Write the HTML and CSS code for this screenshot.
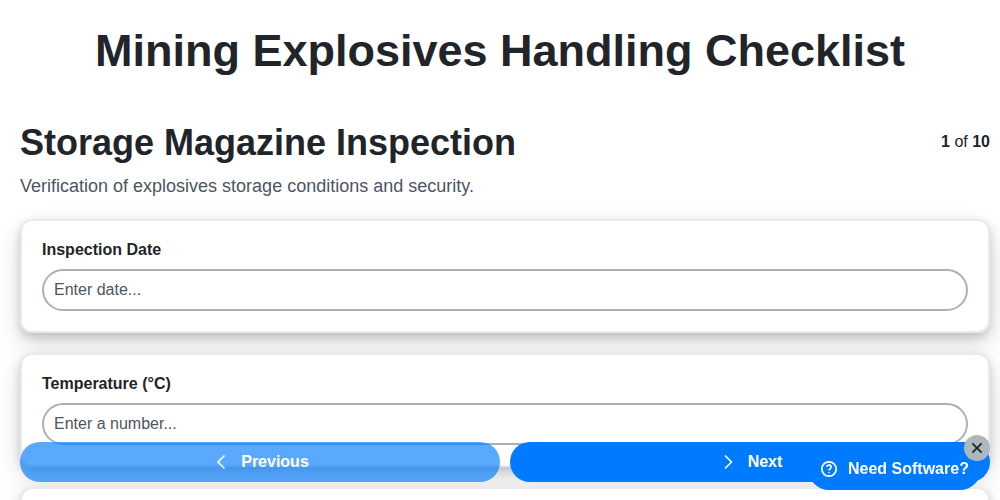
FILE: index.html
```html
<!DOCTYPE html>
<html lang="en">
<head>
  <meta charset="UTF-8" />
  <title>Mining Explosives Handling Checklist</title>
  <link rel="stylesheet" href="styles.css">
</head>
<body>
  <h1>Mining Explosives Handling Checklist</h1>
  <main>
    <div class="section-head">
      <h2>Storage Magazine Inspection</h2>
      <div class="progress"><strong>1</strong> of <strong>10</strong></div>
    </div>
    <p class="section-desc">Verification of explosives storage conditions and security.</p>

    <div class="card">
      <label for="date">Inspection Date</label>
      <input type="text" id="date" placeholder="Enter date...">
    </div>
    <div class="card">
      <label for="temp">Temperature (°C)</label>
      <input type="text" id="temp" placeholder="Enter a number...">
    </div>
    <div class="card card-empty"></div>
  </main>

  <div class="nav">
    <button class="nav-btn prev">
      <svg width="20" height="20" viewBox="0 0 20 20"><path d="M13.5 3.5 L7 10 L13.5 16.5" /></svg>
      Previous
    </button>
    <button class="nav-btn">
      <svg width="20" height="20" viewBox="0 0 20 20"><path d="M7 3.5 L13.5 10 L7 16.5" /></svg>
      Next
    </button>
  </div>

  <div class="help">
    <svg width="18" height="18" viewBox="0 0 18 18">
      <circle cx="9" cy="9" r="7.2" />
      <path d="M6.9 7.1 A2.1 2.1 0 1 1 10 8.9 C9.3 9.3 9 9.7 9 10.4" />
      <circle class="dot" cx="9" cy="12.7" r="0.5" />
    </svg>
    Need Software?
    <span class="help-close">
      <svg width="14" height="14" viewBox="0 0 14 14"><path d="M2.4 2.4 L11.6 11.6 M11.6 2.4 L2.4 11.6" /></svg>
    </span>
  </div>
</body>
</html>
```

FILE: styles.css
```css
body {
  font-family: 'Liberation Sans', Arial, sans-serif;
  background-color: white;
  color: #212529;
  margin: 0;
  padding: 0;
  height: 500px;
  overflow: hidden;
}
h1 {
  font-size: 45px;
  line-height: 52px;
  text-align: center;
  margin: 0;
  padding-top: 25px;
}
main {
  padding: 0 10px 0 20px;
  margin-top: 46px;
}
.section-head {
  display: flex;
  justify-content: space-between;
  align-items: flex-start;
}
h2 {
  font-size: 36px;
  line-height: 40px;
  margin: 0;
}
.progress {
  font-size: 16px;
  line-height: 18px;
  margin-top: 10px;
}
.section-desc {
  font-size: 18px;
  line-height: 24px;
  color: #4b5563;
  margin: 11px 0 21px;
}
.card {
  background: white;
  border: 2px solid #e9e9f0;
  border-radius: 12px;
  padding: 20px;
  margin-bottom: 20px;
  box-shadow: 0 10px 24px rgba(0,0,0,0.16), 0 4px 8px rgba(0,0,0,0.14);
}
.card-empty {
  height: 70px;
}
label {
  display: block;
  font-size: 16px;
  font-weight: bold;
  line-height: 18px;
  margin-bottom: 10px;
}
input {
  display: block;
  box-sizing: border-box;
  width: 100%;
  height: 42px;
  padding: 0 10px;
  font-family: inherit;
  font-size: 16px;
  color: #212529;
  border: 2px solid #a9b1bd;
  border-radius: 21px;
  outline: none;
}
input::placeholder {
  color: #4b5563;
  opacity: 1;
}
.nav {
  position: fixed;
  left: 20px;
  right: 10px;
  top: 442px;
  display: flex;
  gap: 10px;
}
.nav-btn {
  flex: 1;
  height: 40px;
  display: flex;
  align-items: center;
  justify-content: center;
  gap: 10px;
  background-color: #007bff;
  color: white;
  border: none;
  border-radius: 20px;
  font-family: inherit;
  font-size: 16px;
  font-weight: bold;
  cursor: pointer;
}
.nav-btn svg path {
  fill: none;
  stroke: white;
  stroke-width: 1.6;
}
.prev {
  opacity: 0.65;
}
.help {
  position: fixed;
  left: 808px;
  top: 448px;
  width: 173px;
  height: 42px;
  box-sizing: border-box;
  padding-left: 12px;
  display: flex;
  align-items: center;
  gap: 10px;
  background-color: #007bff;
  color: white;
  border-radius: 21px;
  font-size: 16px;
  font-weight: bold;
}
.help svg circle, .help svg path {
  fill: none;
  stroke: white;
  stroke-width: 1.7;
}
.help svg .dot {
  fill: white;
  stroke-width: 0.6;
}
.help-close {
  position: absolute;
  right: -9px;
  top: -13px;
  width: 26px;
  height: 26px;
  border-radius: 50%;
  background-color: #adb5bd;
  display: flex;
  align-items: center;
  justify-content: center;
}
.help .help-close svg path {
  stroke: #212529;
  stroke-width: 1.8;
}
```
